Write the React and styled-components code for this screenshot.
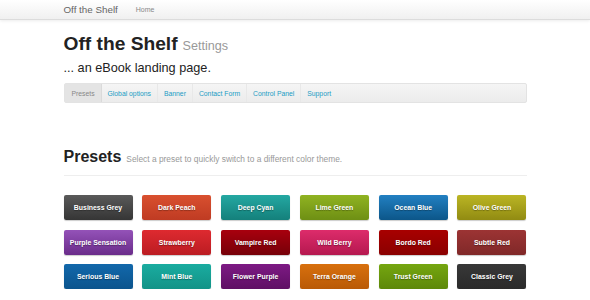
import React from "react";
import styled, { createGlobalStyle } from "styled-components";

const GlobalStyle = createGlobalStyle`
  body {
    margin: 0;
    background: #fff;
    font-family: "Liberation Sans", Arial, sans-serif;
    color: #222;
  }
`;

const Navbar = styled.div`
  height: 19px;
  background: linear-gradient(#ffffff, #f0f0f0);
  border-bottom: 1px solid #dcdcdc;
  box-shadow: 0 1px 3px rgba(0, 0, 0, 0.08);
`;

const Container = styled.div`
  width: 463px;
  margin: 0 auto;
`;

const NavInner = styled(Container)`
  display: flex;
  align-items: center;
  height: 19px;
  gap: 17px;
`;

const Brand = styled.span`
  font-size: 9.8px;
  color: #666;
`;

const NavLink = styled.span`
  font-size: 7px;
  color: #888;
  margin-left: 1px;
`;

const Title = styled.h1`
  margin: 12px 0 0;
  display: flex;
  align-items: baseline;
  gap: 5px;
  font-size: 19.2px;
  line-height: 24px;
  font-weight: bold;
  color: #222;
`;

const Small = styled.small`
  font-size: 12.6px;
  line-height: 16px;
  font-weight: normal;
  color: #999;
`;

const Lead = styled.p`
  margin: 5px 0 0;
  font-size: 12.7px;
  line-height: 15px;
  color: #222;
`;

const Tabs = styled.ul`
  list-style: none;
  margin: 7px 0 0;
  padding: 0;
  display: flex;
  height: 18px;
  background: linear-gradient(#f5f5f5, #ececec);
  border: 1px solid #e3e3e3;
  border-radius: 2px;
`;

const Tab = styled.li`
  display: flex;
  align-items: center;
  padding: 0 6px;
  font-size: 6.8px;
  color: ${({ $active }) => ($active ? "#888" : "#1a9cc4")};
  background: ${({ $active }) => ($active ? "#e4e4e4" : "transparent")};
  border-right: 1px solid ${({ $active }) => ($active ? "#dadada" : "#e8e8e8")};
  &:first-child {
    padding-left: 7px;
  }
  &:last-child {
    border-right: none;
  }
`;

const SectionHead = styled.div`
  margin-top: 44px;
  padding-bottom: 8px;
  border-bottom: 1px solid #eee;
  display: flex;
  align-items: baseline;
  gap: 5px;
`;

const H2 = styled.h2`
  margin: 0;
  font-size: 16px;
  line-height: 20px;
  font-weight: bold;
  color: #222;
`;

const Hint = styled.span`
  font-size: 8.4px;
  color: #999;
`;

const Grid = styled.div`
  margin-top: 19px;
  display: grid;
  grid-template-columns: repeat(6, 69px);
  column-gap: 9.8px;
  row-gap: 9.5px;
`;

const Preset = styled.button`
  height: 25px;
  border: none;
  border-radius: 2px;
  padding: 0;
  font-family: "Liberation Sans", Arial, sans-serif;
  font-weight: bold;
  font-size: 6.9px;
  color: #fff;
  text-shadow: 0 1px 1px rgba(0, 0, 0, 0.35);
  background: linear-gradient(${({ $a }) => $a}, ${({ $b }) => $b});
  box-shadow: 0 1px 1px rgba(0, 0, 0, 0.2);
  cursor: pointer;
`;

const presets = [
  ["Business Grey", "#5a5a5a", "#353535"],
  ["Dark Peach", "#d9502f", "#bf3b23"],
  ["Deep Cyan", "#24a8a2", "#14807b"],
  ["Lime Green", "#90b321", "#6e8f14"],
  ["Ocean Blue", "#2280c2", "#0c5689"],
  ["Olive Green", "#bbb524", "#918b12"],
  ["Purple Sensation", "#9452b8", "#6a2c8a"],
  ["Strawberry", "#de2a30", "#bb1c22"],
  ["Vampire Red", "#a8000e", "#760008"],
  ["Wild Berry", "#dd2c6b", "#b5184f"],
  ["Bordo Red", "#a80000", "#8a0000"],
  ["Subtle Red", "#9c3434", "#802828"],
  ["Serious Blue", "#1268ab", "#0b548d"],
  ["Mint Blue", "#1aaca0", "#129387"],
  ["Flower Purple", "#7d1a84", "#5f0f64"],
  ["Terra Orange", "#d8700e", "#b95a06"],
  ["Trust Green", "#75a610", "#5d8809"],
  ["Classic Grey", "#383838", "#2a2a2a"],
];

const tabs = ["Presets", "Global options", "Banner", "Contact Form", "Control Panel", "Support"];

export default function App() {
  return (
    <>
      <GlobalStyle />
      <Navbar>
        <NavInner>
          <Brand>Off the Shelf</Brand>
          <NavLink>Home</NavLink>
        </NavInner>
      </Navbar>
      <Container>
        <Title>
          Off the Shelf <Small>Settings</Small>
        </Title>
        <Lead>... an eBook landing page.</Lead>
        <Tabs>
          {tabs.map((t, i) => (
            <Tab key={t} $active={i === 0}>
              {t}
            </Tab>
          ))}
        </Tabs>
        <SectionHead>
          <H2>Presets</H2>
          <Hint>Select a preset to quickly switch to a different color theme.</Hint>
        </SectionHead>
        <Grid>
          {presets.map(([name, a, b]) => (
            <Preset key={name} $a={a} $b={b}>
              {name}
            </Preset>
          ))}
        </Grid>
      </Container>
    </>
  );
}
